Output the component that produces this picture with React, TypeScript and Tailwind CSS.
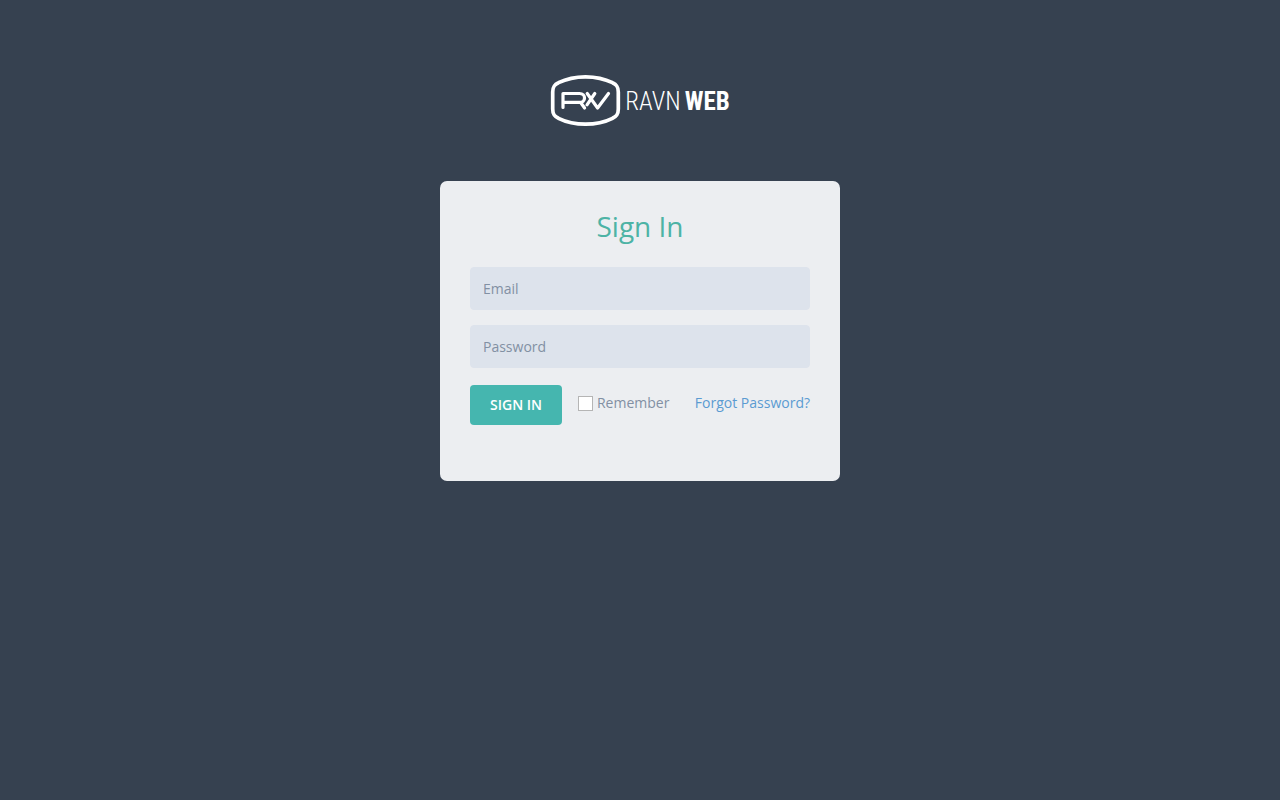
import { useState } from "react";

const inputClass =
  "block h-[43px] w-full rounded border border-[#dde3ec] bg-[#dde3ec] px-3 text-sm text-[#8290a3] placeholder-[#8290a3] outline-none";

function Logo() {
  return (
    <a href="#" aria-label="Ravnweb" className="flex items-center gap-1 text-white">
      <svg width="71" height="53" viewBox="0 0 71 53" fill="none" stroke="currentColor" strokeLinecap="round" strokeLinejoin="round">
        <path
          d="M2.7 18C2.7 12.5 4.5 10.5 8.5 8.7C16 5 26 2.8 35.5 2.8S55 5 62.5 8.7C66.5 10.5 68.3 12.5 68.3 18V35C68.3 40.5 66.5 42.5 62.5 44.3C55 48 45 50.2 35.5 50.2S16 48 8.5 44.3C4.5 42.5 2.7 40.5 2.7 35Z"
          strokeWidth="3.7"
        />
        <path
          d="M13 33.5V19.5H29.5C36.2 19.5 36.2 28.4 29.5 28.4H14M30.8 28.8L34.6 34M37.2 19.5L47.6 34L58.5 19.5M44.8 19.5L37 30.8"
          strokeWidth="3.2"
        />
      </svg>
      <span className="flex gap-1 pt-0.5 font-['Roboto_Condensed','Roboto',sans-serif] text-[25px] leading-7 font-light">
        <span>RAVN</span>
        <b className="font-bold">WEB</b>
      </span>
    </a>
  );
}

export default function App() {
  const [email, setEmail] = useState("");
  const [password, setPassword] = useState("");
  const [remember, setRemember] = useState(false);

  return (
    <div className="min-h-screen bg-[#364150] pt-[74px] font-['Open_Sans',sans-serif] text-sm">
      <header className="flex justify-center">
        <Logo />
      </header>

      <main className="mx-auto mt-[54px] w-full max-w-[400px] rounded-[7px] bg-[#eceef1] px-[30px] pt-[30px] pb-14">
        <form onSubmit={(e) => e.preventDefault()}>
          <h3 className="mb-[25px] text-center text-[28px] leading-[31px] text-[#4db3a5]">Sign In</h3>

          <div className="flex flex-col gap-[15px]">
            <input
              type="email"
              aria-label="Email"
              placeholder="Email"
              value={email}
              onChange={(e) => setEmail(e.target.value)}
              className={inputClass}
            />
            <input
              type="password"
              aria-label="Password"
              placeholder="Password"
              value={password}
              onChange={(e) => setPassword(e.target.value)}
              className={inputClass}
            />
          </div>

          <div className="mt-[17px] flex items-start">
            <button type="submit" className="h-10 cursor-pointer rounded bg-[#45b6af] px-5 font-semibold text-white">
              SIGN IN
            </button>
            <label className="mt-2 ml-4 flex cursor-pointer items-center gap-1 text-[#8290a3]">
              <input
                type="checkbox"
                checked={remember}
                onChange={(e) => setRemember(e.target.checked)}
                className="mt-px size-[15px] appearance-none border border-[#b5b5b5] bg-white checked:bg-[#45b6af]"
              />
              Remember
            </label>
            <a href="#" className="mt-2 ml-auto text-[#5b9bd1]">
              Forgot Password?
            </a>
          </div>
        </form>
      </main>
    </div>
  );
}
